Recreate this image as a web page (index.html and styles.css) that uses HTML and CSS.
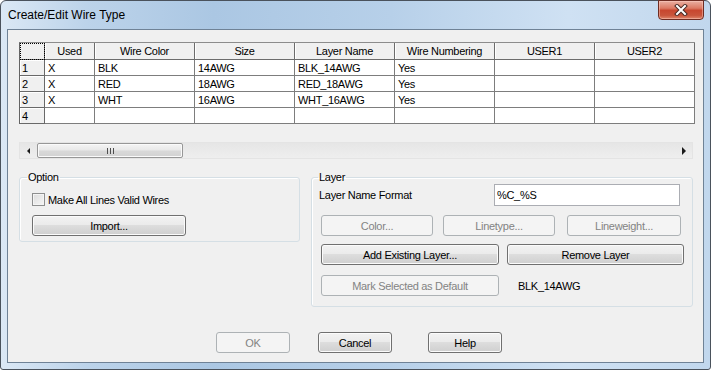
FILE: index.html
```html
<!DOCTYPE html>
<html lang="en">
<head>
    <meta charset="UTF-8">
    <meta name="viewport" content="width=device-width, initial-scale=1.0">
    <title>Create/Edit Wire Type</title>
    <link rel="stylesheet" href="styles.css">
</head>
<body>
  <div class="window">
    <div class="titlebar">
      <span class="title">Create/Edit Wire Type</span>
      <button class="close">
        <svg width="14" height="12" viewBox="0 0 14 12">
          <path d="M3 2 L11 10 M11 2 L3 10" stroke="#4a2a24" stroke-width="4" stroke-linecap="square"/>
          <path d="M3 2 L11 10 M11 2 L3 10" stroke="#ffffff" stroke-width="2" stroke-linecap="square"/>
        </svg>
      </button>
    </div>

    <div class="client">
      <div class="grid">
        <table class="sheet">
          <thead>
            <tr>
              <th class="corner"></th>
              <th class="c-used">Used</th>
              <th class="c-wide">Wire Color</th>
              <th class="c-wide">Size</th>
              <th class="c-wide">Layer Name</th>
              <th class="c-wide">Wire Numbering</th>
              <th class="c-wide">USER1</th>
              <th class="c-wide">USER2</th>
            </tr>
          </thead>
          <tbody>
            <tr>
              <td class="rowhead">1</td><td>X</td><td>BLK</td><td>14AWG</td><td>BLK_14AWG</td><td>Yes</td><td></td><td></td>
            </tr>
            <tr>
              <td class="rowhead">2</td><td>X</td><td>RED</td><td>18AWG</td><td>RED_18AWG</td><td>Yes</td><td></td><td></td>
            </tr>
            <tr>
              <td class="rowhead">3</td><td>X</td><td>WHT</td><td>16AWG</td><td>WHT_16AWG</td><td>Yes</td><td></td><td></td>
            </tr>
            <tr>
              <td class="rowhead">4</td><td></td><td></td><td></td><td></td><td></td><td></td><td></td>
            </tr>
          </tbody>
        </table>
      </div>

      <div class="hscroll">
        <span class="arrow arrow-left"></span>
        <span class="thumb"><span class="grip"></span></span>
        <span class="track"></span>
        <span class="arrow arrow-right"></span>
      </div>

      <div class="panels">
        <fieldset class="group group-option">
          <legend>Option</legend>
          <label class="check-row">
            <span class="checkbox"></span>
            <span>Make All Lines Valid Wires</span>
          </label>
          <button class="btn btn-import">Import...</button>
        </fieldset>

        <fieldset class="group group-layer">
          <legend>Layer</legend>
          <div class="format-row">
            <span class="format-label">Layer Name Format</span>
            <input class="format-input" type="text" value="%C_%S">
          </div>
          <div class="btn-row">
            <button class="btn btn-color" disabled>Color...</button>
            <button class="btn btn-linetype" disabled>Linetype...</button>
            <button class="btn btn-lineweight" disabled>Lineweight...</button>
          </div>
          <div class="btn-row row-two">
            <button class="btn btn-half">Add Existing Layer...</button>
            <button class="btn btn-remove">Remove Layer</button>
          </div>
          <div class="btn-row row-three">
            <button class="btn btn-half" disabled>Mark Selected as Default</button>
            <span class="default-name">BLK_14AWG</span>
          </div>
        </fieldset>
      </div>

      <div class="actions">
        <button class="btn btn-action" disabled>OK</button>
        <button class="btn btn-action btn-cancel">Cancel</button>
        <button class="btn btn-action btn-help">Help</button>
      </div>
    </div>
  </div>
</body>
</html>
```

FILE: styles.css
```css
*{
    box-sizing: border-box;
}
body{
    margin: 0;
    background-color: #ffffff;
    font-family: "Liberation Sans", Arial, sans-serif;
    font-size: 11px;
    letter-spacing: -0.3px;
    color: #000000;
}
.window{
    width: 711px;
    height: 370px;
    border: 1px solid #4a525c;
    border-radius: 6px 6px 3px 3px;
    background: linear-gradient(90deg, #dbe8f5 0%, #bcd3ea 12%, #abc7e3 30%, #b7d0e9 55%, #cfe1f3 80%, #c1d7ed 100%);
    padding: 0 6px 6px;
    display: flex;
    flex-direction: column;
}
.titlebar{
    height: 28px;
    display: flex;
    justify-content: space-between;
    align-items: flex-start;
}
.title{
    font-size: 12px;
    letter-spacing: 0;
    line-height: 14px;
    margin: 7px 0 0 1px;
}
.close{
    width: 46px;
    height: 20px;
    margin-top: -1px;
    padding: 0;
    border: 1px solid #6e2c22;
    border-radius: 0 0 4px 4px;
    background: linear-gradient(#eab0a2 0%, #dc7a64 40%, #c8472f 52%, #c9553c 80%, #e0876c 100%);
    box-shadow: inset 0 0 0 1px rgba(255, 210, 200, 0.45);
    display: flex;
    align-items: center;
    justify-content: center;
}
.client{
    flex: 1;
    border: 1px solid #6f8296;
    background-color: #f0f0f0;
    padding: 12px 0 0 11px;
    display: flex;
    flex-direction: column;
}

/* grid */
.grid{
    height: 82px;
}
.sheet{
    border-collapse: separate;
    border-spacing: 0;
    table-layout: fixed;
    width: 676px;
    border-left: 1px solid #646464;
    border-top: 1px solid #8c8c8c;
}
.sheet th{
    height: 17px;
    padding: 0;
    font-weight: normal;
    background-color: #f0f0f0;
    border-right: 1px solid #6c6c6c;
    border-bottom: 1px solid #6c6c6c;
    box-shadow: inset 1px 0 #ffffff;
    line-height: 16px;
    text-align: center;
}
.sheet .corner{
    width: 25px;
    outline: 1px dotted #000000;
    outline-offset: -1px;
    box-shadow: none;
}
.sheet .c-used{
    width: 50px;
}
.sheet .c-wide{
    width: 100px;
}
.sheet td{
    height: 16px;
    padding: 1px 3px 0;
    background-color: #ffffff;
    border-right: 1px solid #7d7d7d;
    border-bottom: 1px solid #7d7d7d;
    line-height: 14px;
    white-space: nowrap;
    overflow: hidden;
}
.sheet .rowhead{
    padding-left: 2px;
    background-color: #f0f0f0;
    border-right: 1px solid #696969;
    border-bottom: 1px solid #696969;
    box-shadow: inset 1px 1px #ffffff;
}

/* horizontal scrollbar */
.hscroll{
    margin-top: 18px;
    width: 674px;
    height: 17px;
    border: 1px solid #e4e4e4;
    background: linear-gradient(#e6e6e6, #eeeeee);
    display: flex;
    align-items: center;
}
.arrow{
    width: 17px;
    height: 15px;
    display: flex;
    align-items: center;
    justify-content: center;
}
.arrow::before{
    content: "";
    width: 0;
    height: 0;
    border-top: 3px solid transparent;
    border-bottom: 3px solid transparent;
}
.arrow-left::before{
    border-right: 3px solid #1a1a1a;
}
.arrow-right::before{
    border-top-width: 4px;
    border-bottom-width: 4px;
    border-left: 4px solid #1a1a1a;
}
.thumb{
    width: 146px;
    height: 15px;
    border: 1px solid #979797;
    border-radius: 2px;
    background: linear-gradient(#f4f4f4 0%, #e8e8e8 48%, #d9d9d9 52%, #d2d2d2 100%);
    box-shadow: inset 0 0 0 1px #fafafa;
    display: flex;
    align-items: center;
    justify-content: center;
}
.grip{
    width: 7px;
    height: 6px;
    background: repeating-linear-gradient(90deg, #4e4e4e 0 1px, transparent 1px 3px);
}
.track{
    flex: 1;
}

/* group boxes */
.panels{
    display: flex;
    align-items: flex-start;
    gap: 11px;
    margin-top: 12px;
}
.group{
    margin: 0;
    border: 1px solid #d5dfe5;
    border-radius: 3px;
    box-shadow: inset 1px 1px #ffffff;
}
.group legend{
    padding: 0 1px;
    line-height: 12px;
}
.group-option{
    width: 281px;
    padding: 0 0 5px 12px;
}
.group-option legend{
    margin-left: -5px;
}
.group-layer{
    width: 382px;
    padding: 0 0 10px 9px;
}
.group-layer legend{
    margin-left: -3px;
}
.check-row{
    display: flex;
    align-items: center;
    gap: 3px;
    height: 13px;
    margin-top: 10px;
}
.checkbox{
    width: 13px;
    height: 13px;
    border: 1px solid #8e8f8f;
    background: linear-gradient(135deg, #dcdcdc, #f6f6f6);
    box-shadow: inset 0 0 0 1px #f4f4f4;
}

/* buttons */
.btn{
    height: 21px;
    padding: 0;
    font: inherit;
    letter-spacing: inherit;
    color: #000000;
    border: 1px solid #707070;
    border-radius: 3px;
    background: linear-gradient(#f2f2f2 0%, #ebebeb 45%, #dddddd 50%, #cfcfcf 100%);
    box-shadow: inset 0 0 0 1px #fbfbfb;
}
.btn:disabled{
    color: #838383;
    border-color: #adb2b5;
    background: #f4f4f4;
    box-shadow: none;
}
.btn-import{
    width: 154px;
    margin-top: 9px;
}
.format-row{
    display: flex;
    align-items: center;
    margin-top: 1px;
}
.format-label{
    width: 175px;
    margin-left: -2px;
}
.format-input{
    width: 186px;
    height: 22px;
    padding: 0 2px;
    font: inherit;
    letter-spacing: inherit;
    border: 1px solid #abadb3;
    border-top-color: #abadb3;
    background-color: #ffffff;
}
.btn-row{
    display: flex;
    align-items: center;
    margin-top: 9px;
}
.row-two{
    margin-top: 8px;
}
.row-three{
    margin-top: 10px;
}
.btn-color{
    width: 112px;
}
.btn-linetype{
    width: 112px;
    margin-left: 10px;
}
.btn-lineweight{
    width: 114px;
    margin-left: 12px;
}
.btn-half{
    width: 178px;
}
.btn-remove{
    width: 177px;
    margin-left: 8px;
}
.default-name{
    margin-left: 19px;
}
.actions{
    display: flex;
    margin-top: 25px;
    padding-left: 197px;
}
.btn-action{
    width: 74px;
}
.btn-cancel{
    margin-left: 28px;
}
.btn-help{
    margin-left: 36px;
}
```
